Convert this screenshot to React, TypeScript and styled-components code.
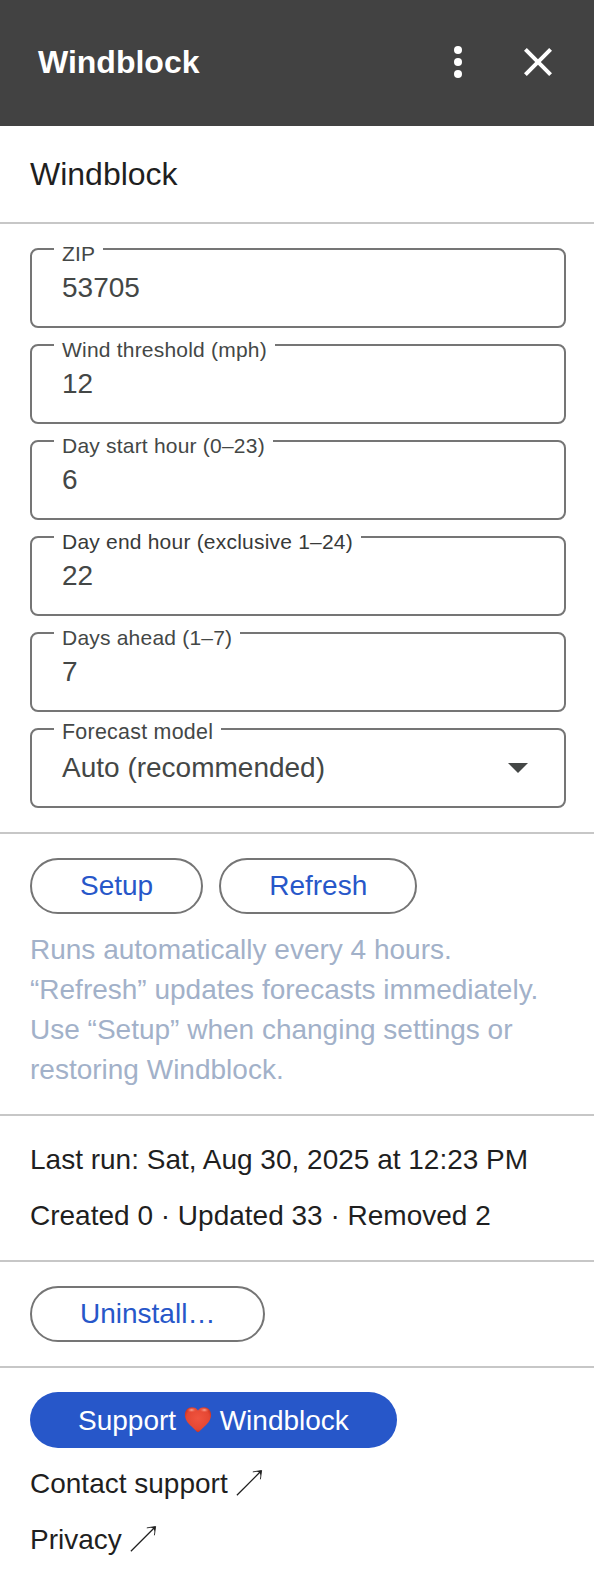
import React from "react";
import styled, { createGlobalStyle } from "styled-components";

const GlobalStyle = createGlobalStyle`
  *, *::before, *::after { box-sizing: border-box; }
  body {
    margin: 0;
    background: #fff;
    color: #1f1f1f;
    font: 28px/40px Arial, "Liberation Sans", sans-serif;
  }
`;

const Panel = styled.main`
  display: flex;
  flex-direction: column;
  min-height: 1570px;
  background: #fff;
`;

const TopBar = styled.header`
  display: flex;
  align-items: center;
  height: 126px;
  padding: 0 32px 2px 38px;
  background: #424242;
  color: #fff;
`;

const AppName = styled.h1`
  flex: 1;
  margin: 0;
  font-size: 32px;
  line-height: 48px;
  font-weight: 700;
`;

const IconButton = styled.button`
  display: flex;
  padding: 0;
  border: 0;
  background: none;
  color: inherit;

  & + & {
    margin-left: 32px;
  }

  svg {
    width: 48px;
    height: 48px;
    fill: currentColor;
  }
`;

const Section = styled.section`
  display: flex;
  flex-direction: column;
  gap: 16px;
  padding: 24px 28px 24px 30px;

  &:not(:last-child) {
    border-bottom: 2px solid #c7c7c7;
  }
`;

const CardTitle = styled.h2`
  margin: 0;
  font-size: 32px;
  line-height: 48px;
  font-weight: 400;
`;

const FieldBox = styled.div`
  position: relative;
  display: flex;
  align-items: center;
  justify-content: space-between;
  height: 80px;
  padding: 0 22px 0 30px;
  border: 2px solid #757575;
  border-radius: 8px;
  color: #444746;
`;

const FieldLabel = styled.label<{ $select?: boolean; $active?: boolean }>`
  position: absolute;
  top: ${({ $select }) => ($select ? -8 : -6)}px;
  left: 22px;
  padding: 0 8px;
  background: #fff;
  color: ${({ $active }) => ($active ? "#383a39" : "#444746")};
  font-size: ${({ $select }) => ($select ? 21.4 : 21)}px;
  line-height: 20px;
  letter-spacing: ${({ $select }) => ($select ? 0.27 : 0.21)}px;
  white-space: nowrap;
`;

const FieldValue = styled.span`
  line-height: 40px;
`;

const Caret = styled.svg`
  width: 48px;
  height: 48px;
  margin-bottom: 2px;
  fill: #444746;
`;

const ButtonRow = styled.div`
  display: flex;
  gap: 16px;
`;

const PillButton = styled.button<{ $filled?: boolean }>`
  display: flex;
  align-items: center;
  gap: 7.8px;
  height: 56px;
  padding: ${({ $filled }) => ($filled ? "2px 48px 0" : "0 48px")};
  border: ${({ $filled }) => ($filled ? "0" : "2px solid #757575")};
  border-radius: 28px;
  background: ${({ $filled }) => ($filled ? "#2757c9" : "#fff")};
  color: ${({ $filled }) => ($filled ? "#fff" : "#2757c9")};
  font: inherit;
  white-space: pre;
`;

const Hint = styled.p`
  margin: 0;
  color: #a2b1c9;
`;

const TextLine = styled.p`
  margin: 0;
`;

const TextLink = styled.a`
  display: flex;
  align-items: center;
  gap: 8px;
  color: inherit;
  text-decoration: none;

  svg {
    width: 28px;
    height: 28px;
    margin-bottom: 2px;
    fill: none;
    stroke: currentColor;
    stroke-width: 1.25;
  }
`;

const HeartIcon = styled.svg`
  width: 28px;
  height: 28px;
  margin-bottom: 3px;
`;

const Arrow = () => (
  <svg viewBox="0 0 28 28" aria-hidden="true">
    <path d="M0.9 26.2 24.6 2.5" />
    <path d="M16.8 2.9 25.6 1.5 24.4 10.3" strokeWidth="0.9" />
    <path d="M20 2.4 25.6 1.5 24.8 7.1 23.7 3.5Z" fill="currentColor" stroke="none" />
  </svg>
);

const Heart = () => (
  <HeartIcon viewBox="0 0 28 28" role="img" aria-label="heart">
    <defs>
      <radialGradient id="heartFill" cx="50%" cy="45%" r="62%">
        <stop offset="0" stopColor="#f0543f" />
        <stop offset="0.7" stopColor="#e54733" />
        <stop offset="1" stopColor="#b92718" />
      </radialGradient>
      <radialGradient id="heartShine">
        <stop offset="0" stopColor="#ffc9bd" stopOpacity="0.8" />
        <stop offset="1" stopColor="#f2573f" stopOpacity="0" />
      </radialGradient>
    </defs>
    <path
      fill="url(#heartFill)"
      d="M14 26.2C12.8 26.2 11.2 23.8 7.6 20.6 3.5 17 .9 13.4.9 8.8.9 4.2 4 1.2 7.8 1.2c2.8 0 5.1 1.2 6.2 3.4 1.1-2.2 3.4-3.4 6.2-3.4 3.8 0 6.9 3 6.9 7.6 0 4.6-2.6 8.2-6.7 11.8C16.8 23.8 15.2 26.2 14 26.2Z"
    />
    <ellipse cx="7.6" cy="4" rx="5" ry="2.6" fill="url(#heartShine)" />
    <ellipse cx="20.4" cy="4" rx="5" ry="2.6" fill="url(#heartShine)" />
  </HeartIcon>
);

const fields = [
  { label: "ZIP", value: "53705" },
  { label: "Wind threshold (mph)", value: "12" },
  { label: "Day start hour (0–23)", value: "6" },
  { label: "Day end hour (exclusive 1–24)", value: "22", active: true },
  { label: "Days ahead (1–7)", value: "7" },
];

export default function App() {
  return (
    <>
      <GlobalStyle />
      <Panel>
        <TopBar>
          <AppName>Windblock</AppName>
          <IconButton aria-label="More options">
            <svg viewBox="0 0 24 24">
              <circle cx="12" cy="6" r="2" />
              <circle cx="12" cy="12" r="2" />
              <circle cx="12" cy="18" r="2" />
            </svg>
          </IconButton>
          <IconButton aria-label="Close">
            <svg viewBox="0 0 24 24">
              <path d="M19 6.41 17.59 5 12 10.59 6.41 5 5 6.41 10.59 12 5 17.59 6.41 19 12 13.41 17.59 19 19 17.59 13.41 12z" />
            </svg>
          </IconButton>
        </TopBar>

        <Section>
          <CardTitle>Windblock</CardTitle>
        </Section>

        <Section>
          {fields.map((field) => (
            <FieldBox key={field.label}>
              <FieldLabel $active={field.active}>{field.label}</FieldLabel>
              <FieldValue>{field.value}</FieldValue>
            </FieldBox>
          ))}
          <FieldBox>
            <FieldLabel $select>Forecast model</FieldLabel>
            <FieldValue>Auto (recommended)</FieldValue>
            <Caret viewBox="0 0 24 24">
              <path d="m7 10 5 5 5-5z" />
            </Caret>
          </FieldBox>
        </Section>

        <Section>
          <ButtonRow>
            <PillButton>Setup</PillButton>
            <PillButton>Refresh</PillButton>
          </ButtonRow>
          <Hint>
            Runs automatically every 4 hours. “Refresh” updates forecasts immediately. Use “Setup”
            when changing settings or restoring Windblock.
          </Hint>
        </Section>

        <Section>
          <TextLine>Last run: Sat, Aug 30, 2025 at 12:23 PM</TextLine>
          <TextLine>Created 0 · Updated 33 · Removed 2</TextLine>
        </Section>

        <Section>
          <ButtonRow>
            <PillButton>Uninstall…</PillButton>
          </ButtonRow>
        </Section>

        <Section>
          <ButtonRow>
            <PillButton $filled>
              <span>Support</span>
              <Heart />
              <span>Windblock</span>
            </PillButton>
          </ButtonRow>
          <TextLink>
            Contact support
            <Arrow />
          </TextLink>
          <TextLink>
            Privacy
            <Arrow />
          </TextLink>
        </Section>
      </Panel>
    </>
  );
}
